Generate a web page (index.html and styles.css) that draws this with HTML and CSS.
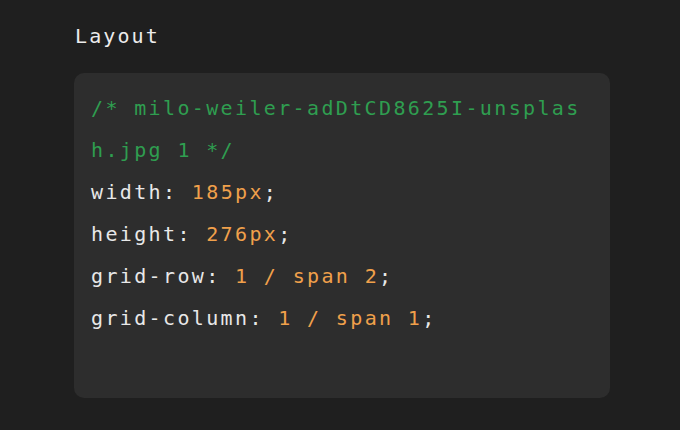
FILE: index.html
```html
<!DOCTYPE html>
<html>
<head>
<meta charset="utf-8">
<link rel="stylesheet" href="styles.css">
</head>
<body>
<div class="panel">
  <h2 class="title">Layout</h2>
  <pre class="code"><span class="comment">/* milo-weiler-adDtCD8625I-unsplash.jpg 1 */</span>
<span class="prop">width</span>: <span class="val">185px</span>;
<span class="prop">height</span>: <span class="val">276px</span>;
<span class="prop">grid-row</span>: <span class="val">1 / span 2</span>;
<span class="prop">grid-column</span>: <span class="val">1 / span 1</span>;
</pre>
</div>
</body>
</html>
```
FILE: styles.css
```css
html, body {
  margin: 0;
  padding: 0;
  background: #1f1f1f;
  width: 680px;
  height: 430px;
  overflow: hidden;
}
.panel {
  padding: 19px 70px 0 74px;
  font-family: "DejaVu Sans Mono", "Liberation Mono", monospace;
}
.title {
  margin: 0 0 20px 1px;
  font-weight: normal;
  font-size: 20px;
  letter-spacing: 2.1px;
  line-height: 34px;
  color: #ececec;
}
.code {
  margin: 0;
  width: 536px;
  box-sizing: border-box;
  padding: 14px 22px 17px 17px;
  background: #2d2d2d;
  border-radius: 10px;
  font-family: "DejaVu Sans Mono", "Liberation Mono", monospace;
  font-size: 20px;
  letter-spacing: 2.36px;
  line-height: 42px;
  color: #e8e8e8;
  white-space: pre-wrap;
  word-break: break-all;
  min-height: 325px;
}
.comment { color: #2f9e50; }
.val { color: #f0a04b; }
.prop { color: #e8e8e8; }
```
